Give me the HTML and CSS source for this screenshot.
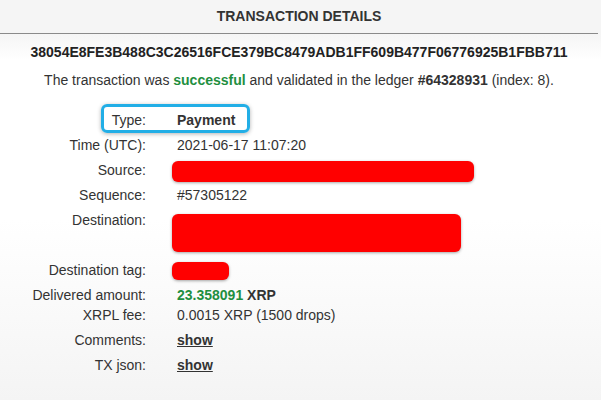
FILE: index.html
```html
<!DOCTYPE html>
<html>
<head>
<meta charset="utf-8">
<link rel="stylesheet" href="styles.css">
</head>
<body>
<div class="page">
  <div class="header">TRANSACTION DETAILS</div>
  <div class="hash">38054E8FE3B488C3C26516FCE379BC8479ADB1FF609B477F06776925B1FBB711</div>
  <div class="summary">The transaction was <b class="green">successful</b> and validated in the ledger <b>#64328931</b> (index: 8).</div>
  <div class="rows">
    <div class="row"><div class="label">Type:</div><div class="value"><b>Payment</b></div></div>
    <div class="row"><div class="label">Time (UTC):</div><div class="value">2021-06-17 11:07:20</div></div>
    <div class="row"><div class="label">Source:</div><div class="value"><span class="redact redact-source"></span></div></div>
    <div class="row"><div class="label">Sequence:</div><div class="value">#57305122</div></div>
    <div class="row row-dest"><div class="label">Destination:</div><div class="value"><span class="redact redact-dest"></span></div></div>
    <div class="row"><div class="label">Destination tag:</div><div class="value"><span class="redact redact-tag"></span></div></div>
    <div class="row"><div class="label">Delivered amount:</div><div class="value"><b class="green">23.358091</b> <b>XRP</b></div></div>
    <div class="row row-fee"><div class="label">XRPL fee:</div><div class="value">0.0015 XRP (1500 drops)</div></div>
    <div class="row"><div class="label">Comments:</div><div class="value"><a class="link" href="#">show</a></div></div>
    <div class="row"><div class="label">TX json:</div><div class="value"><a class="link" href="#">show</a></div></div>
  </div>
  <div class="highlight"></div>
</div>
</body>
</html>
```
FILE: styles.css
```css
html, body {
  margin: 0;
  padding: 0;
}
body {
  width: 601px;
  height: 400px;
  overflow: hidden;
  font-family: "Liberation Sans", Arial, sans-serif;
  font-size: 14px;
  color: #333;
  background: linear-gradient(to bottom, #f5f5f5 0px, #f5f5f5 34px, #ffffff 60px, #ffffff 220px, #f4f4f4 400px);
}
.page {
  position: relative;
  width: 598px;
}
.header {
  height: 33px;
  line-height: 33px;
  text-align: center;
  font-weight: bold;
  font-size: 14px;
  color: #333;
  border-bottom: 1px solid #8a8a8a;
  background: #f5f5f5;
}
.hash {
  margin-top: 8px;
  height: 20px;
  line-height: 20px;
  text-align: center;
  font-weight: bold;
  color: #222;
}
.summary {
  margin-top: 8px;
  height: 20px;
  line-height: 20px;
  text-align: center;
  color: #333;
}
.green {
  color: #1f8f3f;
}
.rows {
  margin-top: 18px;
}
.row {
  display: grid;
  grid-template-columns: 146px 1fr;
  column-gap: 31px;
  height: 25px;
  line-height: 25px;
}
.label {
  text-align: right;
  color: #333;
}
.value {
  color: #333;
}
.row-dest {
  height: 50px;
}
.row-fee {
  height: 20px;
  line-height: 15px;
}
.redact {
  display: block;
  background: #ff0000;
  border-radius: 6px;
  box-shadow: 0 1px 3px rgba(0, 0, 0, 0.35);
  margin-left: -5px;
}
.redact-source {
  width: 302px;
  height: 21px;
  margin-top: 3px;
}
.redact-dest {
  width: 289px;
  height: 38px;
  margin-top: 6px;
}
.redact-tag {
  width: 57px;
  height: 18px;
  margin-top: 4px;
}
.link {
  color: #333;
  font-weight: bold;
  text-decoration: underline;
}
.highlight {
  position: absolute;
  left: 101px;
  top: 104px;
  width: 143px;
  height: 23px;
  border: 3px solid #22aee6;
  border-radius: 6px;
  box-shadow: 0 1px 4px rgba(0, 0, 0, 0.3);
}
```
